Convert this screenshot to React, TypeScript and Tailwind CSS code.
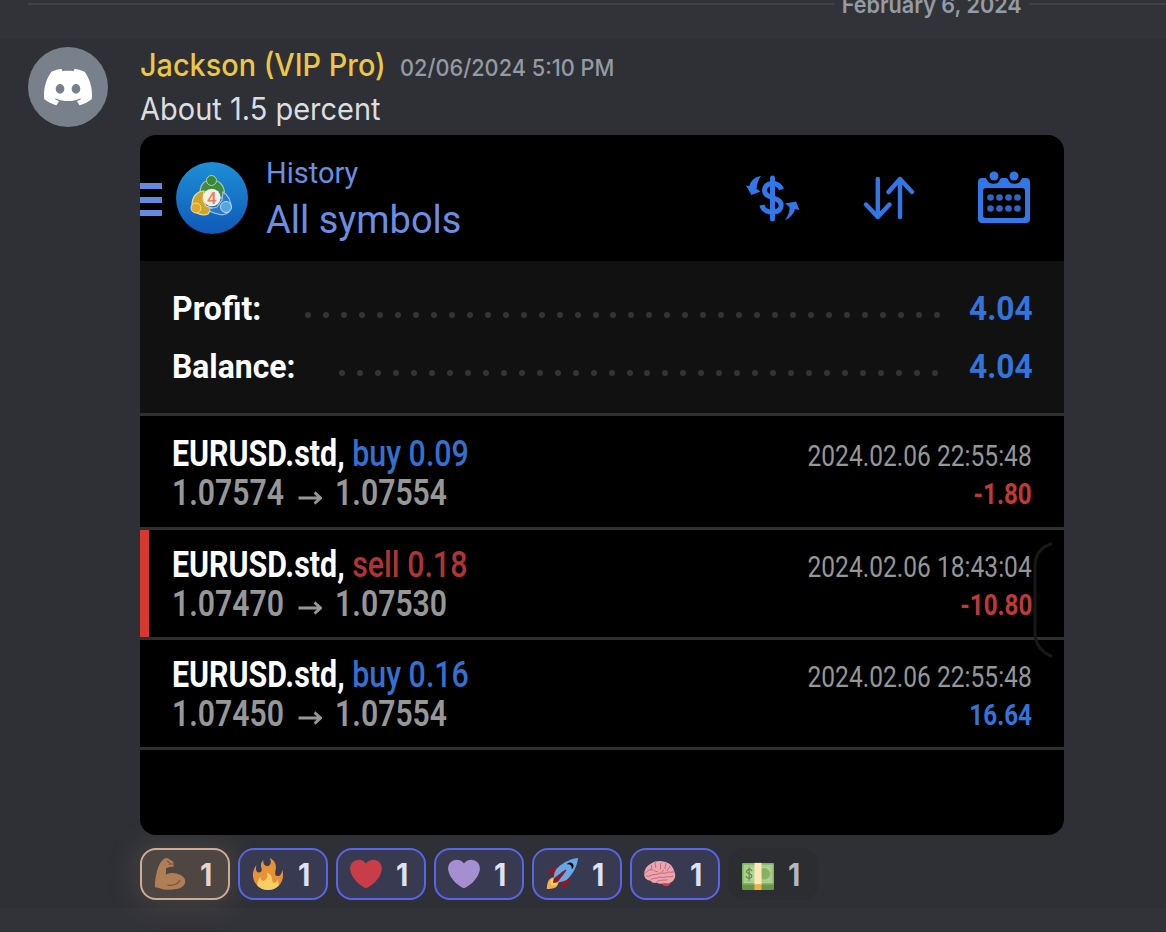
import type { ReactNode } from 'react'
import { SiDiscord } from 'react-icons/si'

type Trade = {
  id: number
  side: 'buy' | 'sell'
  volume: string
  open: string
  close: string
  time: string
  profit: string
  marked?: boolean
}

const trades: Trade[] = [
  { id: 1, side: 'buy', volume: '0.09', open: '1.07574', close: '1.07554', time: '2024.02.06 22:55:48', profit: '-1.80' },
  { id: 2, side: 'sell', volume: '0.18', open: '1.07470', close: '1.07530', time: '2024.02.06 18:43:04', profit: '-10.80', marked: true },
  { id: 3, side: 'buy', volume: '0.16', open: '1.07450', close: '1.07554', time: '2024.02.06 22:55:48', profit: '16.64' },
]

function Emoji({ children }: { children: ReactNode }) {
  return (
    <svg viewBox="0 0 36 36" className="size-8 shrink-0">
      {children}
    </svg>
  )
}

const HEART =
  'M35.885 11.833c0-5.45-4.418-9.868-9.867-9.868-3.308 0-6.227 1.633-8.018 4.129-1.791-2.496-4.71-4.129-8.017-4.129-5.45 0-9.868 4.417-9.868 9.868 0 .772.098 1.52.266 2.241C1.751 22.587 11.216 31.568 18 34.034c6.783-2.466 16.249-11.447 17.617-19.959.17-.721.268-1.469.268-2.242z'

function Muscle() {
  return (
    <Emoji>
      <path fill="#af7e57" d="M1.2 32.6C.8 28 1.6 21.500 3.200 15.500 4.700 9.800 7.500 3.500 11 1.200 13 .2 14.200-.2 15.500.4l4.500 2.700c1.500.7 2.500 2 1.900 3.200l.3 2c-.2 1.500-1.400 2-3 1.600l-3.700.8c-1.200.2-2 1-1.900 2.200l-.3 5.900c2.700-1.600 6.400-2.200 9.700-1.600 7 .8 12.100 4 12.100 9.200 0 4.800-4.400 7.600-10.100 8.500-6.500 1.200-13.500 1.200-18.500-.9-1.900-.3-5.100-.2-5.300-1.400z" />
      <path fill="none" stroke="#7c533e" strokeWidth="1.200" strokeLinecap="round" d="M15.500 30.500c6 1 12-.8 13.500-5.500M15 3.600l2.300 1.500c.7.700.5 1.700-.3 2.200M18.500 6.800l3 .1" />
    </Emoji>
  )
}

function Fire() {
  return (
    <Emoji>
      <path fill="#e99235" d="M35 19c0-2.062-.367-4.039-1.04-5.868-.46 5.389-3.333 8.157-6.335 6.868-2.812-1.208-.917-5.917-.777-8.164.236-3.809-.012-8.169-6.931-11.794 2.875 5.500.333 8.917-2.333 9.125-2.958.231-5.667-2.542-4.667-7.042-3.238 2.386-3.332 6.402-2.333 9 1.042 2.708-.042 4.958-2.583 5.208-2.840.280-4.418-3.041-2.963-8.333C2.520 10.965 1 14.805 1 19c0 9.389 7.611 17 17 17s17-7.611 17-17z" />
      <path fill="#f7cd66" d="M28.394 23.999c.148 3.084-2.561 4.293-4.019 3.709-2.106-.843-1.541-2.291-2.083-5.291s-2.625-5.083-5.708-6c2.250 6.333-1.247 8.667-3.080 9.084-1.872.426-3.753-.001-3.968-4.007C7.352 23.668 6 26.676 6 30c0 .368.023.730.055 1.090C9.125 34.124 13.342 36 18 36s8.875-1.876 11.945-4.910c.032-.360.055-.722.055-1.090 0-2.187-.584-4.236-1.606-6.001z" />
    </Emoji>
  )
}

function Heart() {
  return (
    <Emoji>
      <path fill="#c93d48" d={HEART} />
    </Emoji>
  )
}

function PurpleHeart() {
  return (
    <Emoji>
      <path fill="#a68fd0" d={HEART} />
    </Emoji>
  )
}

function Rocket() {
  return (
    <Emoji>
      <path fill="#8f1a24" d="M1 17l8-7 16 1 1 16-7 8s.001-5.999-6-12-12-6-12-6z" />
      <path fill="#f3ad4b" d="M.973 35s-.036-7.979 2.985-11S15 21.187 15 21.187 14.999 29 11.999 32c-3 3-11.026 3-11.026 3z" />
      <circle fill="#f7cd66" cx="8.999" cy="27" r="4" />
      <path fill="#66a9e6" d="M35.999 0s-10 0-22 10c-6 5-6 14-4 16s11 2 16-4c10-12 10-22 10-22z" />
      <path d="M26.999 5c-1.623 0-3.013.971-3.641 2.360.502-.227 1.055-.360 1.641-.360 2.209 0 4 1.791 4 4 0 .586-.133 1.139-.359 1.640 1.389-.627 2.359-2.017 2.359-3.640 0-2.209-1.791-4-4-4z" />
      <path fill="#8f1a24" d="M8 28s0-4 1-5 13.001-10.999 14-10-9.001 13-10.001 14S8 28 8 28z" />
    </Emoji>
  )
}

function Brain() {
  return (
    <Emoji>
      <path fill="#cc3f4c" d="M19 27c1 3.200 4 5.200 7 4.800 2.700-.4 4.200-2.600 3.500-5.300z" />
      <path fill="#e8a6b0" d="M.3 19C0 13.500 3 8.500 8 6.200 12 3.200 19 2.600 24 4.600c5 1.300 8.500 4.700 9.600 9.200 2.300 4.500 2.100 9-.8 11.700-2.800 2.900-6.200 3.200-9.800 2.600-3 .8-6 1.300-8.600-.2-3 .5-5.700-.2-7-2.300C3.800 25 .6 23 .3 19z" />
      <g fill="none" stroke="#c9636f" strokeWidth="1.100" strokeLinecap="round">
        <path d="M2 17c2-3.500 4.500-4.500 8-3.500M8 8c1.500 2 .6 4.500-1 5.500M13 5c-1.200 2 .5 3.200.2 5.500M19 6c-1.800 2.200.8 3.500-.5 6.500M24.500 6.500c.8 2-1.500 3.200-.8 5.500M29 9.500c-.2 2.200-2.500 2.500-3 4.500" />
        <path d="M3 20.500c4 .8 6-2.500 9.500-2s5-2.500 8.500-1.500 5.500-2.300 9-1l3.500-.5M8 24.500c2.500-3 6-1 8-2.500s5 1 8-.5 5.500 1 8.500-1M14.500 27c1-2.500 4-1.500 6-2s4 .5 5.500-.5M12 14.500l3 1M22 14l-2 1.500" />
      </g>
    </Emoji>
  )
}

function Cash() {
  return (
    <Emoji>
      <path fill="#699545" d="M0 28h36v6.500a1.500 1.500 0 0 1-1.500 1.500h-33A1.500 1.500 0 0 1 0 34.500z" />
      <rect fill="#84b264" y="5.500" width="36" height="24.500" rx="1.200" />
      <rect fill="#b1d499" x="1.800" y="7.500" width="32.400" height="20.500" rx="1" />
      <rect fill="none" stroke="#8fbf71" strokeWidth=".7" x="3.500" y="9.200" width="29" height="17" rx=".8" />
      <circle fill="#84b264" cx="25" cy="17.800" r="6.500" />
      <path fill="none" stroke="#5f8e3d" strokeWidth="1.400" strokeLinecap="round" d="M11 14.200c-.8-1.300-2-1.700-3.200-1.500-3.500.5-3.300 3.900-.6 4.700l1.400.4c3.300 1 3.200 4.700-.5 5-1.500.1-2.800-.6-3.300-1.900M8 11v14" />
      <path fill="#ffe8b6" d="M14 5.500h8V30h-8z" />
      <path fill="#f3ad4b" d="M14 29.500h8V36h-8z" />
    </Emoji>
  )
}

const reactions = [
  { id: 'muscle', icon: <Muscle />, style: 'border-[#cfab96] bg-[#4d4642] text-[#e6d5cc] shadow-[0_0_28px_6px_rgba(160,130,110,0.2)]' },
  { id: 'fire', icon: <Fire />, style: 'border-[#5865e8] bg-[#373a50] text-[#dee0fc]' },
  { id: 'heart', icon: <Heart />, style: 'border-[#5865e8] bg-[#373a50] text-[#dee0fc]' },
  { id: 'purple', icon: <PurpleHeart />, style: 'border-[#5865e8] bg-[#373a50] text-[#dee0fc]' },
  { id: 'rocket', icon: <Rocket />, style: 'border-[#5865e8] bg-[#373a50] text-[#dee0fc]' },
  { id: 'brain', icon: <Brain />, style: 'border-[#5865e8] bg-[#373a50] text-[#dee0fc]' },
  { id: 'cash', icon: <Cash />, style: 'border-transparent bg-[#2b2d31] text-[#b5b8be]' },
]

function TerminalLogo() {
  return (
    <svg viewBox="0 0 72 72" className="ml-[14px] mt-[27px] size-[72px] shrink-0">
      <defs>
        <linearGradient id="sky" x1="0" y1="0" x2="0" y2="1">
          <stop offset="0" stopColor="#1d8fd6" />
          <stop offset="1" stopColor="#1059b8" />
        </linearGradient>
      </defs>
      <circle cx="36" cy="36" r="36" fill="url(#sky)" />
      {/* three linked figures */}
      <path fill="#3f8a45" stroke="#a9c98c" strokeWidth="1.200" d="M24 31c0-8 4-13 11.500-13S48 23 48.500 31l-1 6-6-3-6-4-6 3-5 2z" />
      <path fill="#cfa52e" stroke="#eddc90" strokeWidth="1.200" d="M16 43c0-8 5-14 12-14l-1 9 3 6 6 2-4 6c-5 2-12 0-16-5z" />
      <path fill="#2e77c2" stroke="#9cc6e8" strokeWidth="1.200" d="M47 30c5 3 8 8 8 16-2 6-8 8-13 6-5-1-9-3-9-5l8-2 5-7z" />
      <circle cx="35.500" cy="18.500" r="5" fill="#358a3a" stroke="#b7d59a" strokeWidth="1" />
      <circle cx="20" cy="46" r="5" fill="#e3a92c" stroke="#f1dd8b" strokeWidth="1" />
      <circle cx="50" cy="45" r="5.500" fill="#55a7e4" stroke="#b5daf3" strokeWidth="1" />
      <circle cx="35.800" cy="35.500" r="8.800" fill="#f5efe8" />
      <text x="35.800" y="41.500" textAnchor="middle" className="fill-[#e37f57] font-['Roboto'] text-[17px] font-medium">4</text>
    </svg>
  )
}

function CurrencyIcon() {
  return (
    <svg viewBox="0 0 54 48" className="h-12 w-[54px]" fill="none">
      <g stroke="#3277e8" strokeWidth="5">
        <path d="M35.500 15.500C34 11 29 8.800 24.500 9.800 17.500 11.500 16.500 19 22.500 22l8.500 3.500c6.500 3 5 11.500-2.500 12.500-6 .7-11.500-1.500-12.500-7" />
        <path strokeLinecap="round" d="M26.500 4v41" />
      </g>
      <path fill="#3277e8" d="M15 2C8.500 3 4.500 7 3.500 12L0 11.500l5.500 9.500 9-3.500-4-2.500C11 10 12 6 15 2zM39 46c5-2 8.500-5.500 10-11l4.500 1-3.500-8.500-11 2 4.500 3.500C44 37.500 42 42 39 46z" />
    </svg>
  )
}

function SortIcon() {
  return (
    <svg viewBox="0 0 52 44" className="h-11 w-[52px]" fill="none" stroke="#3277e8" strokeWidth="4.400" strokeLinecap="round" strokeLinejoin="round">
      <path d="M14.800 3v38M3 28.500 14.800 41 26.500 28.500M37 41V3M25.500 16 37 3l12 13" />
    </svg>
  )
}

function CalendarIcon() {
  return (
    <svg viewBox="0 0 52 53" className="h-[53px] w-[52px]" fill="#3277e8">
      <path fillRule="evenodd" d="M4 7h3.500c1 0 1 1.500 2 3s3 2.800 6 2.800 5.500-1.300 6-3.300C21.800 8 22.500 7 24 7h4c1.500 0 2.200 1 2.500 2.500.5 2 3 3.300 6 3.300s5-1.300 6-2.800 1-3 2-3H48a4 4 0 0 1 4 4v37a4 4 0 0 1-4 4H4a4 4 0 0 1-4-4V11a4 4 0 0 1 4-4zM8 17a3 3 0 0 0-3 3v24a3 3 0 0 0 3 3h36a3 3 0 0 0 3-3V20a3 3 0 0 0-3-3z" />
      <circle cx="16" cy="5" r="4.500" />
      <circle cx="36" cy="5" r="4.500" />
      {[12.500, 21.500, 30.500, 39.500].map(x => (
        <g key={x} fill="#2d66c4">
          <circle cx={x} cy="26.500" r="3.300" />
          <circle cx={x} cy="37.500" r="3.300" />
        </g>
      ))}
    </svg>
  )
}

function Dots({ count }: { count: number }) {
  return (
    <div className="mt-[13px] flex flex-1 items-center justify-between">
      {Array.from({ length: count }, (_, i) => (
        <span key={i} className="size-[6px] rounded-full bg-[#343434]" />
      ))}
    </div>
  )
}

function TradeRow({ trade }: { trade: Trade }) {
  const sideColor = trade.side === 'buy' ? 'text-[#3470cf]' : 'text-[#b03434]'
  const profitColor = trade.profit.startsWith('-') ? 'text-[#bd3a38]' : 'text-[#3374dc]'

  return (
    <div className="relative flex h-[110.3px] justify-between whitespace-nowrap border-b-[3px] border-[#303030] pl-8 pr-8">
      {trade.marked && <span className="absolute inset-y-0 left-0 w-[9px] bg-[#d8382f]" />}
      <div className="w-80 pt-4 text-[36px] leading-[39px]">
        <div className="w-max origin-left scale-x-[0.844]">
          <span className="font-bold text-white">EURUSD.std,</span>{' '}
          <span className={`font-medium ${sideColor}`}>{trade.side} {trade.volume}</span>
        </div>
        <div className="flex w-max origin-left scale-x-[0.838] items-center font-semibold text-[#979797]">
          <span>{trade.open}</span>
          <svg viewBox="0 0 29 14" className="ml-4 mr-4 mt-2 h-[14px] w-[29px]" fill="none" stroke="#979797" strokeWidth="2.800">
            <path d="M1 7h26M20 1.500 27.500 7 20 12.500" />
          </svg>
          <span>{trade.close}</span>
        </div>
      </div>
      <div className="flex flex-col items-end pt-[18px] text-[29px] leading-[39px]">
        <div className="origin-right scale-x-[0.847] text-[#969696]">{trade.time}</div>
        <div className={`-mt-px origin-right scale-x-[0.835] font-bold ${profitColor}`}>{trade.profit}</div>
      </div>
    </div>
  )
}

function TradingHistory() {
  return (
    <div className="relative h-[700px] w-[924px] overflow-hidden rounded-2xl bg-black font-['Roboto',sans-serif]">
      <div className="flex h-[126px]">
        <div className="mt-12 flex w-[22px] flex-col gap-[7.500px]">
          <span className="h-[6px] bg-[#6489e0]" />
          <span className="h-[6px] bg-[#6489e0]" />
          <span className="h-[6px] bg-[#6489e0]" />
        </div>
        <TerminalLogo />
        <div className="ml-[18px] pt-[22px] text-[#6c8ee2]">
          <div className="text-[29px] leading-8">History</div>
          <div className="mt-[9px] text-[38px] leading-[45px]">All symbols</div>
        </div>
        <div className="ml-auto flex items-center pr-[34px]">
          <CurrencyIcon />
          <div className="ml-[63px]">
            <SortIcon />
          </div>
          <div className="-mt-0.5 ml-[63px]">
            <CalendarIcon />
          </div>
        </div>
      </div>

      <div className="h-[155.3px] border-b-[3px] border-[#303030] bg-[#111111] px-8 pt-[19px] text-[33px] font-bold">
        <div className="flex h-[57px] items-center">
          <span className="w-[133px] text-white">
            <span className="inline-block origin-left scale-x-[0.97]">Profit:</span>
          </span>
          <Dots count={36} />
          <span className="ml-[29px] w-[63px] text-[#3374dc]">
            <span className="inline-block origin-left scale-x-[0.96]">4.04</span>
          </span>
        </div>
        <div className="mt-px flex h-[57px] items-center">
          <span className="w-[167px] text-white">
            <span className="inline-block origin-left scale-x-[0.965]">Balance:</span>
          </span>
          <Dots count={34} />
          <span className="ml-[31px] w-[63px] text-[#3374dc]">
            <span className="inline-block origin-left scale-x-[0.96]">4.04</span>
          </span>
        </div>
      </div>

      <div className="pt-[3px]">
        {trades.map(trade => (
          <TradeRow key={trade.id} trade={trade} />
        ))}
      </div>

      {/* edge swipe handle */}
      <svg viewBox="0 0 20 116" className="absolute left-[893px] top-[407px] h-[116px] w-5" fill="none" stroke="#181818" strokeWidth="3">
        <path d="M19 1.500C8 5 2 12 2 24v66c0 12 6 20 17 24.500" />
      </svg>
    </div>
  )
}

export default function App() {
  return (
    <div className="h-[932px] w-[1166px] overflow-hidden bg-[#323338] font-['Inter',sans-serif]">
      <div className="flex h-[39px] items-start pl-7">
        <div className="mt-[3px] h-[2px] flex-1 bg-[#3f4147]" />
        <div className="-mt-[9px] flex w-[195px] justify-center whitespace-nowrap text-[23px] font-semibold leading-7 text-[#949ba4]">
          <span className="scale-x-[0.94]">February 6, 2024</span>
        </div>
        <div className="mt-[3px] h-[2px] w-[137px] bg-[#3f4147]" />
      </div>

      <div className="flex h-[869px] bg-[#2e3035] pl-7 pt-2">
        <div className="flex size-20 shrink-0 items-center justify-center rounded-full bg-[#78808c]">
          <SiDiscord className="size-12 text-white" />
        </div>

        <div className="ml-8 pt-px">
          <div className="flex h-[44px] items-baseline whitespace-nowrap leading-[34px]">
            <span className="w-[260px] shrink-0 text-[31px] font-medium text-[#ebc744]">
              <span className="inline-block origin-left scale-x-[0.93]">Jackson (VIP Pro)</span>
            </span>
            <span className="inline-block origin-left scale-x-[0.945] text-[23px] font-medium text-[#949ba4]">02/06/2024 5:10 PM</span>
          </div>
          <div className="h-[43px] text-[31px] leading-[34px] text-[#dbdee1]">
            <span className="inline-block origin-left scale-x-[0.935]">About 1.5 percent</span>
          </div>

          <TradingHistory />

          <div className="mt-[13px] flex gap-2">
            {reactions.map(r => (
              <div key={r.id} className={`flex h-[52px] w-[90px] items-center rounded-2xl border-2 pl-3 ${r.style}`}>
                {r.icon}
                <span className="ml-[14px] mt-0.5 origin-left scale-x-[0.92] text-[31px] font-bold leading-[48px]">1</span>
              </div>
            ))}
          </div>
        </div>
      </div>
      <div className="mt-[23px] h-px bg-[#2b2c30]" />
    </div>
  )
}
